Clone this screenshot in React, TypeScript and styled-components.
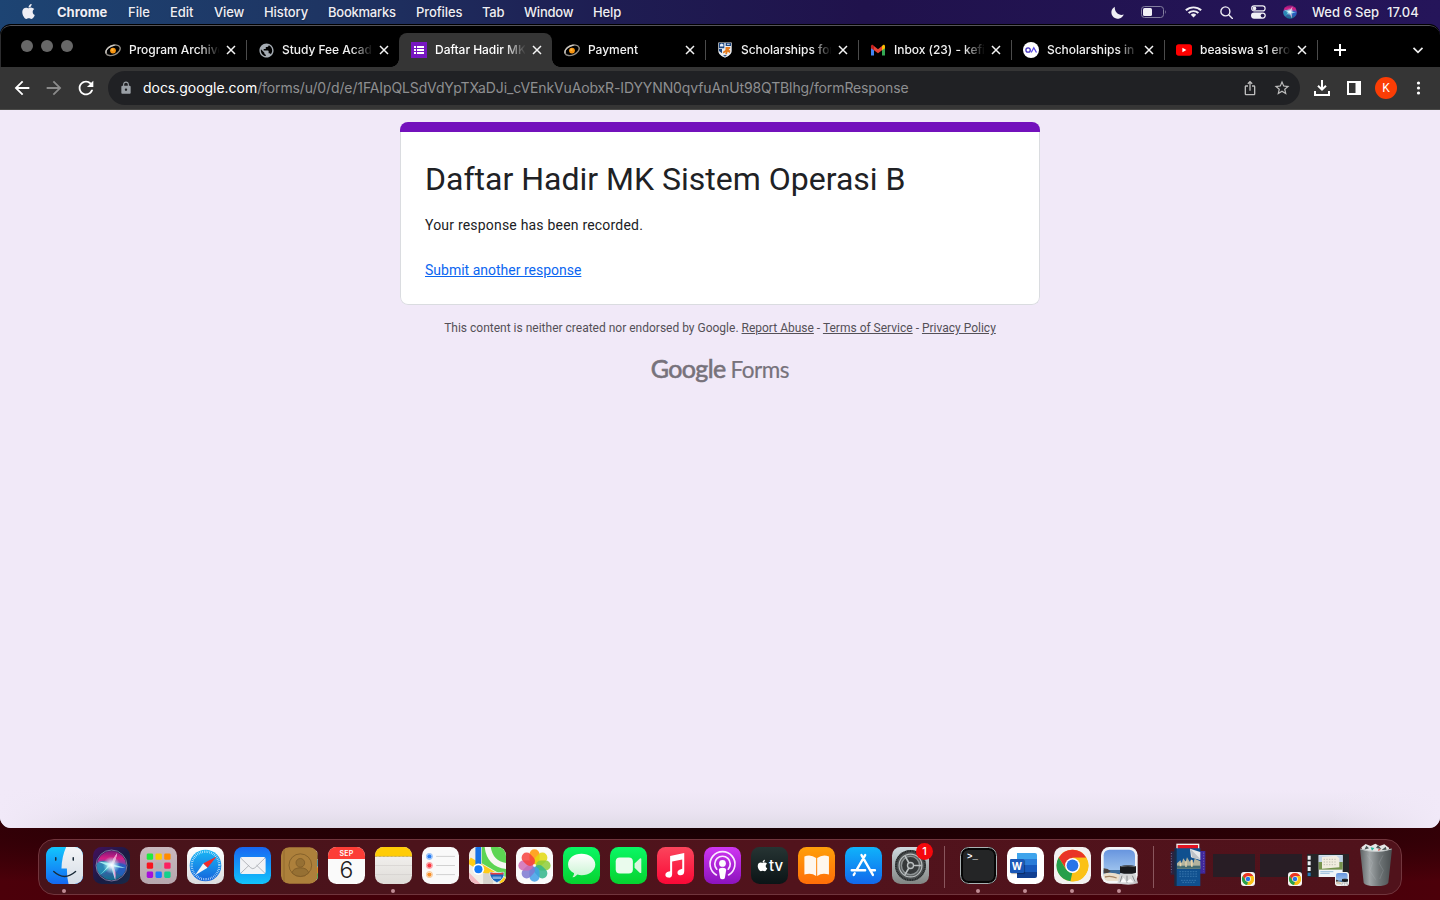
import React from "react";
import styled, { createGlobalStyle } from "styled-components";
import { FaApple } from "react-icons/fa";
import {
  MdArrowBack,
  MdArrowForward,
  MdIosShare,
  MdLock,
  MdPublic,
  MdRefresh,
  MdStarBorder,
} from "react-icons/md";

const GlobalStyle = createGlobalStyle`
  * { box-sizing: border-box; }
  body { margin: 0; overflow: hidden; }
  svg { display: block; flex: none; }
`;

const Desktop = styled.div`
  width: 1440px;
  height: 900px;
  display: flex;
  flex-direction: column;
  overflow: hidden;
  font-family: Inter, "Liberation Sans", sans-serif;
  background:
    linear-gradient(90deg, #1d4473 0, #1e3563 22%, #1e1d52 42%, #20124c 60%, #25155a 100%) 0 0 / 100% 50px no-repeat,
    radial-gradient(ellipse 1400px 62px at 50% 828px, #170003 0, #28000600 100%),
    linear-gradient(90deg, #4c000a, #3b0008 50%, #4c000a);
`;

/* ---------- Menu bar ---------- */

const MenuBar = styled.header`
  height: 24px;
  flex: none;
  display: flex;
  align-items: center;
  justify-content: space-between;
  color: #efeef4;
  font-size: 13px;
  font-weight: 500;
  text-shadow: 0 1px 2px rgba(0, 0, 0, 0.3);
`;

const MenuGroup = styled.div`
  display: flex;
  align-items: center;
  height: 24px;
`;

const AppleSlot = styled.div`
  width: 57px;
  padding-left: 20px;
  padding-bottom: 1px;
`;

const MenuItem = styled.span<{ $w: number; $bold?: boolean; $ls?: number }>`
  width: ${(p) => p.$w}px;
  white-space: nowrap;
  font-weight: ${(p) => (p.$bold ? 700 : 500)};
  letter-spacing: ${(p) => p.$ls ?? 0}px;
`;

const StatusIcon = styled.span<{ $w: number }>`
  width: ${(p) => p.$w}px;
  display: flex;
  justify-content: center;
`;

const Clock = styled.span`
  width: 134px;
  padding: 0 0 1px 6px;
  display: flex;
  gap: 8px;
  letter-spacing: -0.02px;
  white-space: nowrap;
`;

/* ---------- Browser window ---------- */

const BrowserWindow = styled.main`
  height: 804px;
  flex: none;
  display: flex;
  flex-direction: column;
  border-radius: 11px;
  overflow: hidden;
  background: #000;
  border-top: 1px solid #000;
`;

const TabStrip = styled.div`
  height: 42px;
  flex: none;
  display: flex;
  align-items: flex-end;
  background: #000;
  border-top: 1px solid #55545a;
  border-left: 1px solid #2c2c2e;
  border-radius: 10px 10px 0 0;
`;

const TrafficLights = styled.div`
  width: 92px;
  height: 41px;
  padding: 0 0 2px 20px;
  display: flex;
  align-items: center;
  gap: 8px;
`;

const Light = styled.i`
  width: 12px;
  height: 12px;
  border-radius: 50%;
  background: #676767;
`;

const TabBox = styled.div<{ $active?: boolean; $divider?: boolean }>`
  position: relative;
  width: 153px;
  height: 34px;
  padding: 0 10px 0 12px;
  display: flex;
  align-items: center;
  color: ${(p) => (p.$active ? "#fff" : "#f1f1f1")};
  background: ${(p) => (p.$active ? "#353535" : "transparent")};
  border-radius: 8px 8px 0 0;
  &::before {
    content: "";
    display: ${(p) => (p.$active ? "block" : "none")};
    position: absolute;
    left: -8px;
    right: -8px;
    bottom: 0;
    height: 8px;
    background:
      radial-gradient(circle at 0 0, transparent 7.5px, #353535 8px) 0 0 / 8px 8px no-repeat,
      radial-gradient(circle at 8px 0, transparent 7.5px, #353535 8px) 100% 0 / 8px 8px no-repeat;
  }
  &::after {
    content: "";
    display: ${(p) => (p.$divider ? "block" : "none")};
    position: absolute;
    right: -1px;
    top: 7px;
    width: 1px;
    height: 20px;
    background: #4b4b4b;
  }
`;

const IconSlot = styled.span`
  width: 16px;
  flex: none;
  display: flex;
  justify-content: center;
`;

const TabTitle = styled.span`
  flex: none;
  width: 90px;
  margin-left: 8px;
  overflow: hidden;
  white-space: nowrap;
  font-size: 12px;
  font-weight: 500;
  line-height: 18px;
  letter-spacing: -0.03px;
  mask-image: linear-gradient(90deg, #000 70px, transparent 91px);
`;

const CloseSlot = styled.span`
  margin-left: 6px;
  display: flex;
`;

const StripEnd = styled.div`
  flex: 1;
  height: 34px;
  padding: 0 16px 0 17px;
  display: flex;
  align-items: center;
  justify-content: space-between;
`;

const Toolbar = styled.div`
  height: 43px;
  flex: none;
  padding: 0 11px;
  display: flex;
  align-items: center;
  background: #353535;
  border-bottom: 1px solid #4b4b49;
  color: #fff;
`;

const NavButton = styled.span<{ $dim?: boolean }>`
  width: 32px;
  display: flex;
  color: ${(p) => (p.$dim ? "#8b8b8b" : "#fff")};
`;

const Omnibox = styled.div`
  width: 1192px;
  height: 34px;
  margin-left: 1px;
  padding: 0 9px 0 11px;
  border-radius: 17px;
  display: flex;
  align-items: center;
  background: #202124;
  color: #9aa0a6;
`;

const Url = styled.span`
  flex: 1;
  margin-left: 10px;
  font-size: 14px;
  line-height: 20px;
  padding-bottom: 0;
  white-space: nowrap;
  color: #8e8f91;
  letter-spacing: -0.12px;
`;

const Host = styled.span`
  color: #fff;
  letter-spacing: -0.03px;
`;

const OmniActions = styled.span`
  display: flex;
  align-items: center;
  gap: 15px;
  color: #bdbdbd;
`;

const ToolbarActions = styled.div`
  flex: 1;
  display: flex;
  align-items: center;
  gap: 14px;
  padding-left: 13px;
`;

const Avatar = styled.span`
  width: 22px;
  height: 22px;
  border-radius: 50%;
  background: #fb3d05;
  color: #fff;
  font: 400 12px/22px Roboto, sans-serif;
  text-align: center;
`;

/* ---------- Form page ---------- */

const Page = styled.section`
  flex: 1;
  padding-top: 12px;
  display: flex;
  flex-direction: column;
  align-items: center;
  background:
    linear-gradient(90deg, #f1e9f8, #f1e9f800) 0 100% / 110px 40px no-repeat,
    linear-gradient(270deg, #f1e9f8, #f1e9f800) 100% 100% / 110px 40px no-repeat,
    linear-gradient(180deg, #f1e9f8 0, #f1e9f8 680px, #ebe4f2 700px, #e0dae7 718px);
  font-family: Roboto, sans-serif;
`;

const Card = styled.article`
  width: 640px;
  height: 183px;
  border-radius: 8px;
  overflow: hidden;
  display: flex;
  flex-direction: column;
`;

const Accent = styled.div`
  height: 10px;
  flex: none;
  background: #7311bc;
`;

const CardBody = styled.div`
  flex: 1;
  padding: 27px 24px 0;
  border: 1px solid #dadce0;
  border-top: 0;
  border-radius: 0 0 8px 8px;
  background: #fff;
`;

const Title = styled.h1`
  margin: 0;
  font-size: 32px;
  line-height: 40px;
  font-weight: 400;
  color: #202124;
  white-space: nowrap;
`;

const Message = styled.p`
  margin: 16px 0 0;
  font-size: 14px;
  line-height: 20px;
  letter-spacing: 0.2px;
  color: #202124;
`;

const Again = styled.a`
  display: block;
  margin-top: 25px;
  font-size: 14px;
  line-height: 20px;
  color: #0b66f0;
  text-decoration: underline;
`;

const Disclaimer = styled.p`
  margin: 14px 0 0;
  font-size: 12px;
  line-height: 18px;
  color: #545057;
  white-space: nowrap;
  a { color: inherit; text-decoration: underline; }
`;

const Brand = styled.div`
  margin-top: 16px;
  height: 30px;
  display: flex;
  align-items: baseline;
  gap: 5px;
  font-family: Lato, sans-serif;
  line-height: 30px;
  color: #77727b;
`;

const BrandWord = styled.span<{ $size: number; $stroke: number; $ls: number }>`
  font-size: ${(p) => p.$size}px;
  -webkit-text-stroke: ${(p) => p.$stroke}px #77727b;
  letter-spacing: ${(p) => p.$ls}px;
`;

/* ---------- Dock ---------- */

const DockArea = styled.footer`
  flex: 1;
  padding-top: 11px;
  display: flex;
  justify-content: center;
  align-items: flex-start;
`;

const DockBar = styled.nav`
  width: 1364px;
  height: 56px;
  border-radius: 16px;
  border: 1px solid #71353d;
  background: linear-gradient(90deg, #47131a, #51131c 55%, #50121b);
  padding: 7px 2px 0;
  display: flex;
`;

const DockSlot = styled.div`
  position: relative;
  width: 47px;
  height: 48px;
  display: flex;
  flex-direction: column;
  align-items: center;
`;

const PreviewSlot = styled(DockSlot)`
  svg { margin-bottom: -1px; }
`;

const StackSlot = styled(DockSlot)`
  margin-top: -4px;
`;

const Running = styled.i`
  width: 4px;
  height: 4px;
  margin: 5px 1px 0 0;
  border-radius: 50%;
  background: #c18d95;
`;

const DockDivider = styled.i`
  width: 1px;
  height: 42px;
  margin: -1px 10px 0;
  background: #8a565d;
`;

const Badge = styled.span`
  position: absolute;
  right: 1px;
  top: -4px;
  width: 17px;
  height: 17px;
  border-radius: 50%;
  background: #f5080c;
  color: #fff;
  font-size: 11px;
  font-weight: 500;
  line-height: 17px;
  text-align: center;
`;

const TileBox = styled.div<{ $bg: string }>`
  width: 37px;
  height: 37px;
  border-radius: 8.5px;
  overflow: hidden;
  background: ${(p) => p.$bg};
  color: #fff;
`;

const CalMonth = styled.div`
  height: 12px;
  background: #fc3d36;
  font-size: 7px;
  line-height: 13px;
  font-weight: 600;
  text-align: center;
  letter-spacing: 0.2px;
`;

const CalDay = styled.div`
  height: 25px;
  color: #222;
  font-size: 23px;
  line-height: 22px;
  font-weight: 300;
  text-align: center;
`;

const TvLabel = styled.div`
  height: 37px;
  display: flex;
  align-items: center;
  justify-content: center;
  font-size: 15px;
  font-weight: 500;
`;

const Prompt = styled.div`
  height: 37px;
  border: 1.5px solid #a9b2b3;
  border-radius: 8.5px;
  box-shadow: inset 0 0 0 2px #060606;
  padding: 4px 0 0 6px;
  font: 700 9px/10px "Liberation Mono", monospace;
`;

const WordTile = styled.div`
  height: 37px;
  padding: 6px 0 0 3px;
  display: flex;
`;

const WordPages = styled.div`
  width: 27px;
  height: 25px;
  padding: 6px 0 0;
  border-radius: 2px;
  background: linear-gradient(#3fa4ec 0 25%, #2a7cd8 25% 50%, #185abd 50% 75%, #103f91 75%) 7px 0 / 20px 25px no-repeat;
`;

const WordLetter = styled.div`
  width: 14px;
  height: 14px;
  border-radius: 1px;
  background: #1a58b7;
  box-shadow: 1px 1px 1px rgba(0, 0, 0, 0.3);
  font-size: 10px;
  line-height: 14px;
  font-weight: 700;
  text-align: center;
`;

const Mini = styled.div`
  position: relative;
  width: 42px;
  height: 23px;
  margin: 7px 1px 0 0;
  background: #281d25;
`;

const MiniApp = styled.span`
  position: absolute;
  right: 0;
  top: 18px;
  border-radius: 3px;
  overflow: hidden;
  background: #f5f3f3;
`;

/* ---------- Icons ---------- */

type IconProps = { size?: number };

const Art = ({ size = 37, children }: React.PropsWithChildren<IconProps>) => (
  <svg width={size} height={size} viewBox="0 0 110 110">{children}</svg>
);

const CloseIcon = () => (
  <svg width="12" height="12" viewBox="0 0 12 12" stroke="#f4f4f4" strokeWidth="1.5">
    <path d="M2 2l8 8M10 2l-8 8" />
  </svg>
);

const OrbitIcon = () => (
  <svg width="16" height="16" viewBox="0 0 16 16" fill="none">
    <g transform="rotate(-24 8 8.3)">
      <ellipse cx="8" cy="8.3" rx="7.6" ry="4.7" stroke="#8f8b85" strokeWidth="1.4" />
      <path d="M.6 8.300a7.500 4.800 0 0 1 11-4.100" stroke="#d0cdc8" strokeWidth="1.200" />
    </g>
    <circle cx="8" cy="8.6" r="2.900" fill="#f79410" />
    <circle cx="7.4" cy="7.8" r="1.2" fill="#ffb53e" />
  </svg>
);

const FormsIcon = () => (
  <svg width="16" height="16" viewBox="0 0 16 16">
    <path fill="#7716c1" d="M0 0h16v16H0z" />
    <path fill="#fff" d="M3 4h2v2H3zM6 4h7v2H6zM3 7h2v2H3zM6 7h7v2H6zM3 10h2v2H3zM6 10h7v2H6z" />
  </svg>
);

const CrestIcon = () => (
  <svg width="16" height="16" viewBox="0 0 16 16">
    <path fill="#e9edf2" d="M1.3.4h13.4v8.4c0 3.2-3 5.3-6.7 7-3.700-1.700-6.700-3.800-6.700-7z" />
    <path fill="#1c4680" d="M2 1h5.300v5.200H2zM8.700 1H14v3H8.700zM2 7h3v4.200L2 9z" />
    <path fill="#e7eef7" d="M3 2.500l1.700-1 1.700 1v2H3zM10 1.800h2.700v1H10z" />
    <path fill="#e27a1f" d="M8.600 5h4.600v1.600l-1.500.9 1.700 1.300-.6 2.200-2.200-1.300-.6 2.600-1.700-.1.300-2.200-2 1.600-.9-1.500 2.700-2z" />
    <path fill="#2d568d" d="M6 13h4l-2 1.800z" />
  </svg>
);

const GmailIcon = () => (
  <svg width="16" height="16" viewBox="0 0 16 16">
    <path fill="#4285f4" d="M1 13.500h3V7L1 4.500z" />
    <path fill="#34a853" d="M12 13.500h3v-9L12 7z" />
    <path fill="#c5221f" d="M1 4.200v2L4 8.300V4L3 3C2 2.400 1 3 1 4.200z" />
    <path fill="#fbbc04" d="M15 4.200v2l-3 2.100V4l1-1c1-.6 2 0 2 1.200z" />
    <path fill="#ea4335" d="M4 4l4 3.200L12 4v4.300l-4 3-4-3z" />
  </svg>
);

const OaIcon = () => (
  <svg width="16" height="16" viewBox="0 0 16 16" fill="none">
    <circle cx="8" cy="8" r="8" fill="#fff" />
    <circle cx="5.100" cy="8" r="2.200" stroke="#4331bd" strokeWidth="1.300" />
    <path d="M8.200 10.500L10.800 5.800l2.700 4.700" stroke="#5a48e4" strokeWidth="1.300" />
  </svg>
);

const YoutubeIcon = () => (
  <svg width="16" height="16" viewBox="0 0 16 16">
    <rect y="2.300" width="16" height="11.400" rx="2.700" fill="#f00" />
    <path fill="#fff" d="M6.400 5.700v4.600l4-2.300z" />
  </svg>
);

const MoonIcon = () => (
  <svg width="13" height="13" viewBox="0 0 13 13">
    <path fill="#f0eff5" d="M3.800.7A6.400 6.400 0 1 0 12.800 8.600C8 10.400 3.200 6 3.800.7z" />
  </svg>
);

const BatteryIcon = () => (
  <svg width="26" height="12" viewBox="0 0 26 12">
    <rect x=".5" y=".5" width="22" height="11" rx="3" fill="none" stroke="#8480a0" />
    <rect x="2" y="2" width="9" height="8" rx="1.500" fill="#f2f1f7" />
    <path fill="#8480a0" d="M24 4q1.700 2 0 4z" />
  </svg>
);

const WifiIcon = () => (
  <svg width="17" height="12" viewBox="0 0 16 12" preserveAspectRatio="none" fill="none" stroke="#f0eff5" strokeWidth="1.900">
    <path d="M.8 4.300a10.300 10.300 0 0 1 14.400 0" />
    <path d="M3.400 7a6.600 6.600 0 0 1 9.200 0" />
    <path fill="#f0eff5" stroke="none" d="M5.400 8.800a3.800 3.800 0 0 1 5.200 0L8 11.600z" />
  </svg>
);

const SearchIcon = () => (
  <svg width="13" height="13" viewBox="0 0 13 13" fill="none" stroke="#f0eff5" strokeWidth="1.400">
    <circle cx="5.400" cy="5.400" r="4.500" />
    <path d="M8.700 8.700l3.700 3.700" strokeLinecap="round" />
  </svg>
);

const ControlIcon = () => (
  <svg width="15" height="14" viewBox="0 0 15 14">
    <rect x=".7" y=".9" width="13.400" height="5" rx="2.500" fill="none" stroke="#f0eff5" strokeWidth="1.200" />
    <circle cx="3.500" cy="3.400" r="1.800" fill="#f0eff5" />
    <rect y="7.500" width="14.800" height="6.200" rx="3.100" fill="#f0eff5" />
    <circle cx="11.600" cy="10.600" r="1.900" fill="#231650" />
  </svg>
);

const SiriGlyph = ({ id, r }: { id: string; r: number }) => (
  <g>
    <defs>
      <linearGradient id={id} x1="0" y1="0" x2="0" y2="1">
        <stop offset="0" stopColor="#7a1a78" />
        <stop offset=".25" stopColor="#d61d86" />
        <stop offset=".5" stopColor="#5a55b8" />
        <stop offset="1" stopColor="#0f6f8c" />
      </linearGradient>
      <radialGradient id={id + "c"}>
        <stop offset="0" stopColor="#fff" />
        <stop offset=".3" stopColor="#e4f5ff" stopOpacity=".85" />
        <stop offset="1" stopColor="#9fe" stopOpacity="0" />
      </radialGradient>
    </defs>
    <circle cx="55" cy="55" r={r} fill={`url(#${id})`} />
    <path d="M10 50Q30 30 55 54 40 78 20 82 8 68 10 50z" fill="#1a9bb8" opacity=".7" />
    <path d="M55 54Q80 40 100 56 98 74 86 86 68 78 55 54z" fill="#1e5fc4" opacity=".75" />
    <path d="M55 53L20 84Q40 64 44 56L16 44Q40 46 52 49L55 50Q60 32 72 18 68 40 60 52L96 62Q74 62 62 58 66 78 66 98 58 78 55 60z" fill="#a8f5f5" opacity=".9" />
    <path d="M55 50Q60 32 72 18 68 40 60 52z" fill="#ff8cc8" />
    <path d="M55 56Q62 74 66 98 72 74 58 55z" fill="#ff9ad6" opacity=".8" />
    <circle cx="55" cy="54" r="26" fill={`url(#${id}c)`} />
  </g>
);

const MenuSiri = () => (
  <svg width="14" height="14" viewBox="8 8 94 94"><SiriGlyph id="menuSiri" r={46} /></svg>
);

const FinderArt = () => (
  <Art>
    <defs>
      <linearGradient id="finL" x2="0" y2="1"><stop stopColor="#12c6fd" /><stop offset="1" stopColor="#1468f2" /></linearGradient>
      <linearGradient id="finR" x2="0" y2="1"><stop stopColor="#f3f5f7" /><stop offset="1" stopColor="#d5dde6" /></linearGradient>
    </defs>
    <path fill="url(#finL)" d="M0 0h110v110H0z" />
    <path fill="url(#finR)" d="M60 0h50v110H67Q62 90 62 64H46Q47 28 60 0z" />
    <path d="M29 32v7M81 32v7" stroke="#1a2b38" strokeWidth="4.500" strokeLinecap="round" />
    <path d="M23 73q32 29 65 0" stroke="#1a2b38" strokeWidth="4" fill="none" strokeLinecap="round" />
  </Art>
);

const SiriArt = () => (
  <Art>
    <SiriGlyph id="dockSiri" r={43} />
    <circle cx="55" cy="55" r="46" fill="none" stroke="#8d86ad" strokeWidth="2.500" />
  </Art>
);

const launchColors = ["#1fea3d", "#fdc900", "#ff8b00", "#f8131d", "#aeb4b7", "#fb2061", "#a510db", "#1b7dff", "#13d08c"];

const LaunchpadArt = () => (
  <Art>
    {launchColors.map((c, i) => (
      <rect key={c} x={20 + (i % 3) * 26} y={19 + Math.floor(i / 3) * 27} width="19" height="19" rx="4" fill={c} />
    ))}
  </Art>
);

const SafariArt = () => (
  <Art>
    <defs><linearGradient id="saf" x2="0" y2="1"><stop stopColor="#19b7f5" /><stop offset="1" stopColor="#1664dc" /></linearGradient></defs>
    <circle cx="55" cy="55" r="47" fill="url(#saf)" />
    <circle cx="55" cy="55" r="41" fill="none" stroke="#e9f6ff" strokeWidth="7" strokeDasharray="1.700 3.660" />
    <path d="M88 28L61 62 48 49z" fill="#f22c2b" />
    <path d="M24 84l24-35 13 13z" fill="#f5f5f5" />
  </Art>
);

const MailArt = () => (
  <Art>
    <rect x="18" y="30" width="76" height="50" rx="6" fill="#f1f2f5" />
    <path d="M20 33l30 29q6 5 12 0l30-29M20 78l25-24M92 78L67 54" stroke="#a9abb1" strokeWidth="2.500" fill="none" />
  </Art>
);

const ContactsArt = () => (
  <svg width="38" height="37" viewBox="0 0 114 110">
    <path d="M98 10h10q4 0 4 5v80q0 5-4 5H98z" fill="#dbd1bd" />
    <path d="M104 16h9v20h-9z" fill="#59432a" />
    <path d="M104 38h9v20h-9z" fill="#259ed3" />
    <path d="M104 60h9v18h-9z" fill="#ef8e15" />
    <path d="M104 78h9v18h-9z" fill="#32b951" />
    <rect width="109" height="110" rx="23" fill="#ad803b" />
    <path d="M9 3v104" stroke="#896229" strokeWidth="2" />
    <g fill="#967033" stroke="#7e5b28" strokeWidth="2.500">
      <circle cx="58" cy="54" r="34" fill="none" />
      <circle cx="58" cy="47" r="13" />
      <path d="M33 77q4-15 25-15t25 15q-10 11-25 11T33 77z" />
    </g>
  </svg>
);

const NotesArt = () => (
  <Art>
    <path d="M0 0h110v28H0z" fill="#ffcc05" />
    <path d="M0 28h110" stroke="#8c7740" strokeWidth="2" strokeDasharray="2 2" />
    <path d="M0 55h110M0 82h110" stroke="#cbc8c5" strokeWidth="1.500" />
  </Art>
);

const RemindersArt = () => (
  <Art>
    {["#267df3", "#fa3640", "#f6902a"].map((c, i) => (
      <g key={c}>
        <circle cx="22" cy={28 + i * 27} r="9" fill="#fff" stroke={c} strokeWidth="2" opacity=".75" />
        <circle cx="22" cy={28 + i * 27} r="6.500" fill={c} />
        <path d={`M42 ${28 + i * 27}h56`} stroke="#bdbdbe" strokeWidth="2" />
      </g>
    ))}
  </Art>
);

const MapsArt = () => (
  <Art>
    <path fill="#f1eee6" d="M0 0h110v110H0z" />
    <path d="M38 0h72v90L38 48z" fill="#5dd552" />
    <path d="M55-5Q60 52 115 57" stroke="#f8f7f2" strokeWidth="18" fill="none" />
    <path d="M0 40l110 65" stroke="#ffcc16" strokeWidth="20" />
    <path d="M0 76l34 34H0z" fill="#f3b8c1" />
    <path d="M42 78h30v32H42z" fill="#d6d3cd" />
    <path d="M19 0h17v60H19z" fill="#1673e8" />
    <circle cx="28" cy="66" r="17" fill="#fff" />
    <circle cx="28" cy="66" r="12" fill="#147bf7" />
    <path d="M62 75q20 3 42 0 3 21-21 31-22-10-21-31z" fill="#1863bc" stroke="#fff" strokeWidth="2" />
    <path d="M64 76q20 3 38 0v6H64z" fill="#e93c42" />
    <path d="M70 88h26v7H70z" fill="#78a9df" />
  </Art>
);

const petals = ["#ff9500", "#e2d80e", "#8ccc38", "#33b589", "#3f9de6", "#7d78d0", "#d06bb3", "#f6403c"];

const PhotosArt = () => (
  <Art>
    {petals.map((c, i) => (
      <rect key={c} x="40" y="7" width="30" height="44" rx="15" fill={c} opacity=".85" transform={`rotate(${i * 45} 55 55)`} />
    ))}
  </Art>
);

const MessagesArt = () => (
  <Art>
    <defs><linearGradient id="msg" x2="0" y2="1"><stop stopColor="#fff" /><stop offset="1" stopColor="#c8f3d1" /></linearGradient></defs>
    <path fill="url(#msg)" d="M55 20c23 0 41 14 41 32S78 84 55 84q-6 0-12-2-7 8-15 8 5-5 5-12C21 72 15 63 15 52c0-18 17-32 40-32z" />
  </Art>
);

const FacetimeArt = () => (
  <Art>
    <rect x="17" y="31" width="51" height="48" rx="12" fill="#eafbed" />
    <path d="M73 49l16-15q4-2 4 2v39q0 4-4 2L73 62z" fill="#daf6df" />
  </Art>
);

const MusicArt = () => (
  <Art>
    <path fill="#fff" d="M39 27l42-9v54c0 10-7 13-13 12-10-1-10-16 3-18l4-1V37l-30 6v38c0 9-6 11-12 10-11-1-11-16 2-18l4-1z" />
  </Art>
);

const PodcastsArt = () => (
  <Art>
    <g fill="none" stroke="#fbeaff" strokeWidth="5" strokeLinecap="round">
      <path d="M37 83a37 37 0 1 1 36 0" />
      <path d="M38 66a23 23 0 1 1 34 0" />
    </g>
    <circle cx="55" cy="49" r="10" fill="#fff" />
    <path d="M44 68q1-6 11-6t11 6l-4 24q-1 4-7 4t-7-4z" fill="#fff" />
  </Art>
);

const BooksArt = () => (
  <Art>
    <path fill="#fff7ee" d="M54 33q-16-13-35-5v54q20-7 35 4zM57 33q16-13 35-5v54q-20-7-35 4z" />
  </Art>
);

const AppStoreArt = () => (
  <Art>
    <g stroke="#fff" strokeWidth="7" strokeLinecap="round">
      <path d="M60 24L36 66M29 78l-3 5M49 24l34 59M20 69h40M76 69h13" />
    </g>
  </Art>
);

const SettingsArt = () => (
  <Art>
    <circle cx="55" cy="55" r="46" fill="#4d5152" />
    <circle cx="55" cy="55" r="43" fill="none" stroke="#252829" strokeWidth="6" strokeDasharray="3 2" />
    <circle cx="55" cy="55" r="34" fill="#5c6061" stroke="#b8bdbe" strokeWidth="3.500" />
    <circle cx="55" cy="55" r="27" fill="#36393a" stroke="#8c9293" strokeWidth="4" />
    <path d="M58 55h30M53 52L39 27M53 58L38 83" stroke="#babfc0" strokeWidth="5" />
    <circle cx="55" cy="55" r="9" fill="#444849" stroke="#babfc0" strokeWidth="4" />
  </Art>
);

const ChromeArt = ({ size = 37 }: IconProps) => (
  <Art size={size}>
    <circle cx="55" cy="55" r="47" fill="#fbc116" />
    <path d="M14 32A47 47 0 0 1 96 32H55L37 66z" fill="#e93427" />
    <path d="M14 31L36 67l18 11-5 24A47 47 0 0 1 14 31z" fill="#269f4b" />
    <path d="M75 66L49 102A47 47 0 0 0 96 32H55z" fill="#fbc116" />
    <circle cx="55" cy="55" r="22" fill="#fff" />
    <circle cx="55" cy="55" r="17.500" fill="#2774e8" />
  </Art>
);

const PreviewArt = ({ size = 38 }: IconProps) => (
  <svg width={size} height={size} viewBox="0 0 114 114">
    <defs><linearGradient id={"pv" + size} x2="0" y2="1"><stop stopColor="#6795df" /><stop offset="1" stopColor="#b7d8f4" /></linearGradient></defs>
    <rect width="110" height="110" rx="25" fill="#f4f5f6" />
    <rect x="8" y="8" width="94" height="94" rx="17" fill={`url(#pv${size})`} />
    <path d="M8 69h94v13H8z" fill="#3c6b98" />
    <path d="M8 64l12 2 9 7-10 6H8zM70 67h32v7H72z" fill="#4c443f" />
    <path d="M8 80q24-7 52 4l42-4v10q-4 12-14 12H25Q9 102 8 87z" fill="#eadfcb" />
    <path d="M12 90q17-5 35 3" stroke="#a58665" strokeWidth="4" fill="none" />
    <path d="M58 78h45l8 31q-28 8-62 0z" fill="#d4d6d8" opacity=".92" />
    <path d="M63 86l-6 20M78 86v22M94 86l8 18" stroke="#8b8e91" strokeWidth="3" />
    <path d="M68 92l8 13 12-10 9 11H58z" fill="#f9f9f9" />
    <path d="M57 58q24-7 48 0v19q-24 7-48 0z" fill="#18191c" />
    <path d="M59 59q22-5 44 0" stroke="#63676b" strokeWidth="3" fill="none" />
  </svg>
);

const StackArt = () => (
  <svg width="38" height="44" viewBox="0 0 114 132">
    <path d="M5 25h28v70H5z" fill="#2a2440" />
    <path d="M80 24h29v68H80z" fill="#3f279c" />
    <path d="M7 30v58M104 29v57" stroke="#a590b8" strokeWidth="2" strokeDasharray="3 5" />
    <path d="M22 2h69v25H22z" fill="#f1eeee" />
    <path d="M26 6h61v16H26z" fill="#e41222" />
    <path d="M18 16h76v113H18z" fill="#10508f" />
    <path d="M16 16h7v113h-7z" fill="#172d49" />
    <path d="M24 61l10-9 4 8 5-14 7 10 4-13 8 13 5-7 6 11 4-13 17 8v22H24z" fill="#b2b39e" />
    <path d="M24 68h70v9H24z" fill="#456c71" />
    <path d="M32 60h5v10h-5zM49 55h4v17h-4zM66 51h5v20h-5z" fill="#e8d4ac" />
    <path d="M63 17l31 10v24L66 43z" fill="#e7e8ea" />
    <path d="M64 17l30 31-24-3z" fill="#bec2c7" />
    <g stroke="#4886ba" strokeWidth="2" strokeDasharray="5 3">
      <path d="M31 86h54M31 93h54M31 100h54M36 112h47M40 118h40" />
    </g>
  </svg>
);

const PhotoWindowArt = () => (
  <svg width="42" height="23" viewBox="0 0 126 69">
    <path fill="#252527" d="M0 0h126v69H0z" />
    <path d="M2 5h9v12H2zM2 22h9v12H2zM2 39h9v12H2z" fill="#edf0f4" />
    <path d="M2 56h9v10H2z" fill="#2a79b8" />
    <path fill="#f0f4f8" d="M35 3h72v66H35z" />
    <path fill="#bfd3e6" d="M35 4h72v20H35z" />
    <path fill="#75924d" d="M35 24h72v23H35z" />
    <path fill="#f0ecdf" d="M45 9l43-4 9 8v27l-52 4z" />
    <path d="M50 16h40M50 24h40M50 32h40" stroke="#a9a99c" strokeWidth="2" strokeDasharray="4 4" />
    <path d="M40 53h39M40 58h28" stroke="#6aa5d0" strokeWidth="2" />
  </svg>
);

const TrashArt = () => (
  <svg width="34" height="44" viewBox="0 0 102 132">
    <defs>
      <linearGradient id="bin"><stop stopColor="#5e6365" /><stop offset=".3" stopColor="#a0a5a7" /><stop offset=".6" stopColor="#707678" /><stop offset="1" stopColor="#494e50" /></linearGradient>
    </defs>
    <path d="M7 13L20 3l15 6 14-7 13 7 14-5 15 11-8 16H14z" fill="#e5e6e6" />
    <path d="M22 8l8 8-14 4zM57 6l10 12-16-3zM80 11l3 9-15 1z" fill="#4d5655" />
    <path d="M35 13l11 2-7 8z" fill="#21b89b" />
    <path d="M59 17l7 3-9 4z" fill="#e04f45" />
    <path d="M3 18q48 16 96 0L88 119q-4 10-37 10t-37-10z" fill="url(#bin)" />
    <path d="M4 18q47 15 94 0" stroke="#bdc2c3" strokeWidth="3" fill="none" />
    <path d="M25 37l16 22-9 24 18 27M72 37L60 60l13 22-11 26" stroke="#c0c5c6" strokeWidth="3" fill="none" opacity=".2" />
  </svg>
);

/* ---------- Data ---------- */

const menus: [string, number, number][] = [
  ["File", 42, 0], ["Edit", 44, -0.05], ["View", 50, -0.1], ["History", 64, -0.1], ["Bookmarks", 88, -0.25],
  ["Profiles", 66, -0.1], ["Tab", 42, -0.2], ["Window", 69, -0.2], ["Help", 40, -0.1],
];

const tabs = [
  { title: "Program Archive", icon: <OrbitIcon />, divider: true },
  { title: "Study Fee Academic", icon: <MdPublic size={17} color="#a4abb2" /> },
  { title: "Daftar Hadir MK Sistem", icon: <FormsIcon />, active: true },
  { title: "Payment", icon: <OrbitIcon />, divider: true },
  { title: "Scholarships for", icon: <CrestIcon />, divider: true },
  { title: "Inbox (23) - kefin", icon: <GmailIcon />, divider: true },
  { title: "Scholarships in E", icon: <OaIcon />, divider: true },
  { title: "beasiswa s1 erop", icon: <YoutubeIcon />, divider: true },
];

type DockEntry = { name: string; bg: string; art: React.ReactNode; dot?: boolean; badge?: string };

const apps: DockEntry[] = [
  { name: "Finder", bg: "#17a0f8", art: <FinderArt />, dot: true },
  { name: "Siri", bg: "linear-gradient(135deg,#44105c,#191b43 55%,#182a49)", art: <SiriArt /> },
  { name: "Launchpad", bg: "linear-gradient(#c9b8be,#b7a7ae)", art: <LaunchpadArt /> },
  { name: "Safari", bg: "linear-gradient(#fff,#dcdcde)", art: <SafariArt /> },
  { name: "Mail", bg: "linear-gradient(#1767f3,#12c4fb)", art: <MailArt /> },
  { name: "Contacts", bg: "transparent", art: <ContactsArt /> },
  { name: "Calendar", bg: "#fafafa", art: <><CalMonth>SEP</CalMonth><CalDay>6</CalDay></> },
  { name: "Notes", bg: "linear-gradient(#f6f5f3,#dfdcd8)", art: <NotesArt />, dot: true },
  { name: "Reminders", bg: "#f9f9f9", art: <RemindersArt /> },
  { name: "Maps", bg: "#eee", art: <MapsArt /> },
  { name: "Photos", bg: "#fafafa", art: <PhotosArt /> },
  { name: "Messages", bg: "linear-gradient(#0af765,#06d22f)", art: <MessagesArt /> },
  { name: "FaceTime", bg: "linear-gradient(#0af765,#06d22f)", art: <FacetimeArt /> },
  { name: "Music", bg: "linear-gradient(#fb455c,#fa0836)", art: <MusicArt /> },
  { name: "Podcasts", bg: "linear-gradient(#cf35f2,#8c13bd)", art: <PodcastsArt /> },
  { name: "TV", bg: "linear-gradient(#263433,#0b1416)", art: <TvLabel><FaApple size={13} />tv</TvLabel> },
  { name: "Books", bg: "linear-gradient(#ff9f0a,#ff6e08)", art: <BooksArt /> },
  { name: "App Store", bg: "linear-gradient(#0fb3fb,#1268ec)", art: <AppStoreArt /> },
  { name: "Settings", bg: "linear-gradient(#cfdadf,#818482)", art: <SettingsArt />, badge: "1" },
];

const extraApps: DockEntry[] = [
  { name: "Terminal", bg: "#242526", art: <Prompt>&gt;_</Prompt>, dot: true },
  { name: "Word", bg: "#fff", art: <WordTile><WordPages><WordLetter>W</WordLetter></WordPages></WordTile>, dot: true },
  { name: "Chrome", bg: "#f3f1f0", art: <ChromeArt />, dot: true },
];

const DockApp = ({ app }: { app: DockEntry }) => (
  <DockSlot>
    <TileBox $bg={app.bg}>{app.art}</TileBox>
    {app.dot && <Running />}
    {app.badge && <Badge>{app.badge}</Badge>}
  </DockSlot>
);

export default function App() {
  return (
    <Desktop>
      <GlobalStyle />
      <MenuBar>
        <MenuGroup>
          <AppleSlot><FaApple size={17} /></AppleSlot>
          <MenuItem $w={71} $bold>Chrome</MenuItem>
          {menus.map(([label, w, ls]) => <MenuItem key={label} $w={w} $ls={ls}>{label}</MenuItem>)}
        </MenuGroup>
        <MenuGroup>
          <StatusIcon $w={28}><MoonIcon /></StatusIcon>
          <StatusIcon $w={46}><BatteryIcon /></StatusIcon>
          <StatusIcon $w={32}><WifiIcon /></StatusIcon>
          <StatusIcon $w={34}><SearchIcon /></StatusIcon>
          <StatusIcon $w={30}><ControlIcon /></StatusIcon>
          <StatusIcon $w={33}><MenuSiri /></StatusIcon>
          <Clock><span>Wed 6 Sep</span><span>17.04</span></Clock>
        </MenuGroup>
      </MenuBar>

      <BrowserWindow>
        <TabStrip>
          <TrafficLights><Light /><Light /><Light /></TrafficLights>
          {tabs.map((t, i) => (
            <TabBox key={i} $active={t.active} $divider={t.divider}>
              <IconSlot>{t.icon}</IconSlot>
              <TabTitle>{t.title}</TabTitle>
              <CloseSlot><CloseIcon /></CloseSlot>
            </TabBox>
          ))}
          <StripEnd>
            <svg width="12" height="12" viewBox="0 0 12 12" stroke="#fff" strokeWidth="2"><path d="M6 0v12M0 6h12" /></svg>
            <svg width="12" height="12" viewBox="0 0 12 12" stroke="#eee" strokeWidth="1.700" fill="none"><path d="M1.500 3.800L6 8.300l4.500-4.500" /></svg>
          </StripEnd>
        </TabStrip>
        <Toolbar>
          <NavButton><MdArrowBack size={22} /></NavButton>
          <NavButton $dim><MdArrowForward size={22} /></NavButton>
          <NavButton><MdRefresh size={22} /></NavButton>
          <Omnibox>
            <MdLock size={14} />
            <Url><Host>docs.google.com</Host>/forms/u/0/d/e/1FAIpQLSdVdYpTXaDJi_cVEnkVuAobxR-IDYYNN0qvfuAnUt98QTBlhg/formResponse</Url>
            <OmniActions><MdIosShare size={16} /><MdStarBorder size={18} /></OmniActions>
          </Omnibox>
          <ToolbarActions>
            <svg width="18" height="18" viewBox="0 0 18 18" fill="none" stroke="#fff" strokeWidth="2"><path d="M9 1v9M5 6.700l4 4 4-4M2 12v4h14v-4" /></svg>
            <svg width="16" height="14" viewBox="-2 0 16 14"><path fill="#fff" fillRule="evenodd" d="M0 0h14v14H0zM2 2v10h6.500V2z" /></svg>
            <Avatar>K</Avatar>
            <svg width="16" height="14" viewBox="0 0 16 14" fill="#fff">
              <circle cx="7.500" cy="2" r="1.600" /><circle cx="7.500" cy="7" r="1.600" /><circle cx="7.500" cy="12" r="1.600" />
            </svg>
          </ToolbarActions>
        </Toolbar>
        <Page>
          <Card>
            <Accent />
            <CardBody>
              <Title>Daftar Hadir MK Sistem Operasi B</Title>
              <Message>Your response has been recorded.</Message>
              <Again>Submit another response</Again>
            </CardBody>
          </Card>
          <Disclaimer>
            This content is neither created nor endorsed by Google. <a>Report Abuse</a> - <a>Terms of Service</a> - <a>Privacy Policy</a>
          </Disclaimer>
          <Brand>
            <BrandWord $size={25} $stroke={0.6} $ls={-0.65}>Google</BrandWord>
            <BrandWord $size={22.5} $stroke={0.2} $ls={-0.45}>Forms</BrandWord>
          </Brand>
        </Page>
      </BrowserWindow>

      <DockArea>
        <DockBar>
          {apps.map((a) => <DockApp key={a.name} app={a} />)}
          <DockDivider />
          {extraApps.map((a) => <DockApp key={a.name} app={a} />)}
          <PreviewSlot><PreviewArt /><Running /></PreviewSlot>
          <DockDivider />
          <StackSlot><StackArt /></StackSlot>
          <DockSlot><Mini><MiniApp><ChromeArt size={14} /></MiniApp></Mini></DockSlot>
          <DockSlot><Mini><MiniApp><ChromeArt size={14} /></MiniApp></Mini></DockSlot>
          <DockSlot><Mini><PhotoWindowArt /><MiniApp><PreviewArt size={14} /></MiniApp></Mini></DockSlot>
          <StackSlot><TrashArt /></StackSlot>
        </DockBar>
      </DockArea>
    </Desktop>
  );
}
